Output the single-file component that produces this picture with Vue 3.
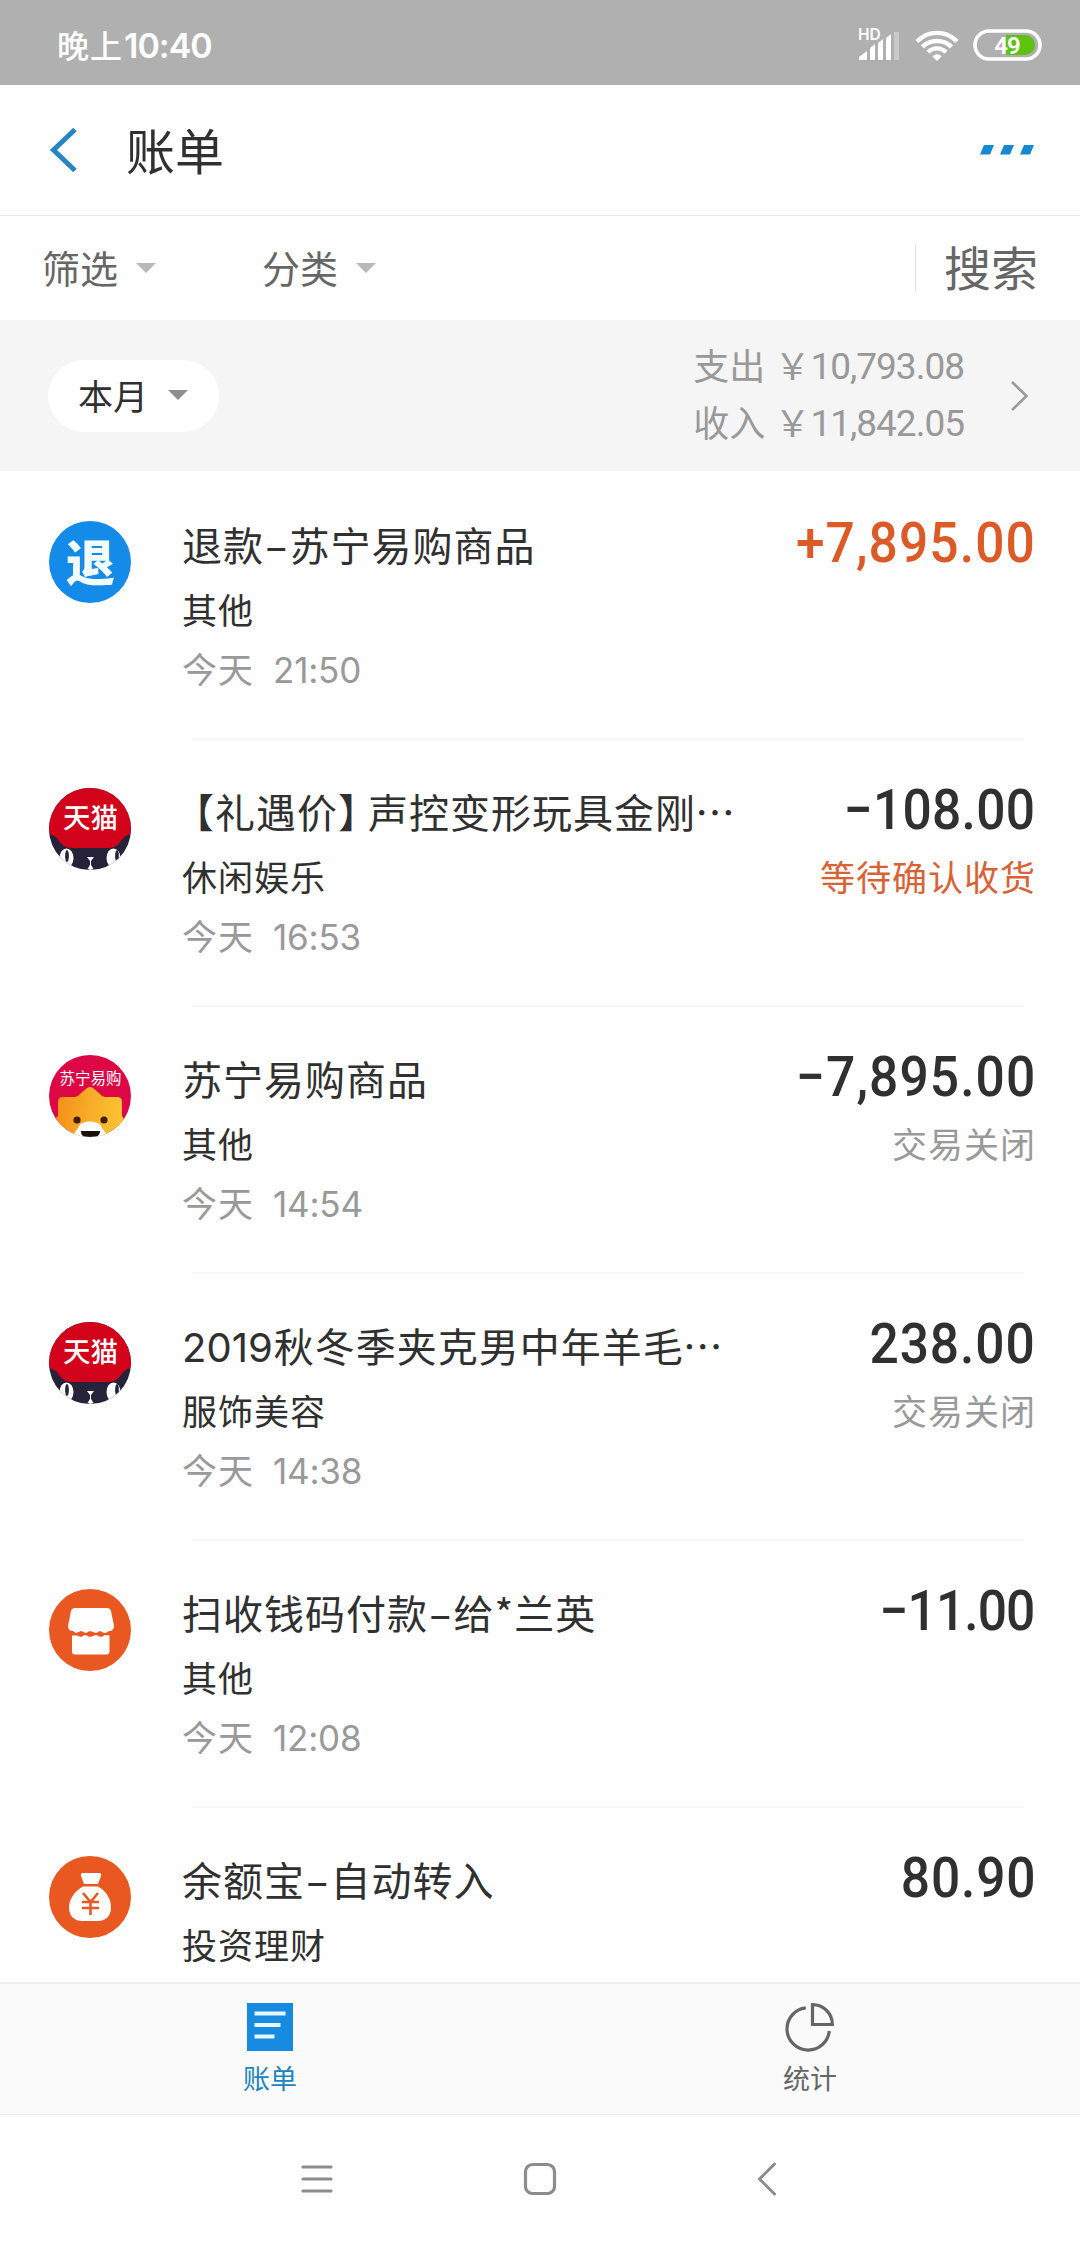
<script setup>
const bills = [
  { icon: 'refund', title: ['退款', '–', '苏宁易购商品'], type: '其他', time: '21:50', amount: '+7,895.00', income: true, spacing: 1.2 },
  { icon: 'tmall', title: ['【', '礼遇价', '】', '声控变形玩具金刚', '…'], type: '休闲娱乐', time: '16:53', amount: '−108.00', status: '等待确认收货', pending: true, spacing: 0.3 },
  { icon: 'suning', title: ['苏宁易购商品'], type: '其他', time: '14:54', amount: '−7,895.00', status: '交易关闭', spacing: 1.2 },
  { icon: 'tmall', title: ['2019', '秋冬季夹克男中年羊毛', '…'], type: '服饰美容', time: '14:38', amount: '238.00', status: '交易关闭', spacing: 1 },
  { icon: 'shop', title: ['扫收钱码付款', '–', '给*兰英'], type: '其他', time: '12:08', amount: '−11.00', spacing: -1 },
  { icon: 'bag', title: ['余额宝', '–', '自动转入'], type: '投资理财', amount: '80.90', spacing: 0.9 },
]

const totals = [
  { label: '支出', sum: '10,793.08' },
  { label: '收入', sum: '11,842.05' },
]

const pieceClass = { '–': 'dash', '【': 'open', '】': 'close', '2019': 'year', '…': 'dots' }
</script>

<template>
  <div class="screen">
    <header class="status">
      <div class="clock">晚上<span class="digits">10:40</span></div>
      <div class="indicators">
        <svg class="signal" width="44" height="36" viewBox="0 0 44 36">
          <text x="0" y="14" class="hd">HD</text>
          <path fill="#fff" d="M1 34v-3l8-6v9zM12 34V22l5-4v16zM20 34V17l5-4v21zM28 34V12l5-4v26z" />
          <path fill="#c9c9c9" d="M36 6h5v28h-5z" />
        </svg>
        <svg class="wifi" width="44" height="32" viewBox="0 0 44 32">
          <g fill="none" stroke="#fff" stroke-width="4.4">
            <path d="M2 11.5C13 0 31 0 42 11.5" />
            <path d="M7.500 17C15 9 29 9 36.500 17" />
            <path d="M13 22.300C18 17 26 17 31 22.300" />
          </g>
          <path fill="#fff" d="M17.500 26.500c2-3 7-3 9 0L22 31z" />
        </svg>
        <svg class="battery" width="69" height="32" viewBox="0 0 69 32">
          <path fill="#5cc312" d="M33 6h19a10 10 0 0 1 0 20H33z" />
          <rect x="2" y="2" width="65" height="28" rx="14" fill="none" stroke="#fff" stroke-width="3.600" />
          <text x="34" y="24.500" text-anchor="middle" class="level">49</text>
        </svg>
      </div>
    </header>

    <nav class="titlebar">
      <svg class="back" width="30" height="46" viewBox="0 0 30 46">
        <path d="M27 2.500 5.500 23 27 43.500" fill="none" stroke="#2586c2" stroke-width="5" />
      </svg>
      <h1>账单</h1>
      <svg class="more" width="54" height="10" viewBox="0 0 54 10" fill="#1688d0">
        <path d="M4 0h10l-4 9.500H0zM24 0h10l-4 9.500H20zM44 0h10l-4 9.500H40z" />
      </svg>
    </nav>

    <section class="filters">
      <div class="filter"><span>筛选</span><i class="caret"></i></div>
      <div class="filter"><span>分类</span><i class="caret"></i></div>
      <div class="search"><span>搜索</span></div>
    </section>

    <section class="summary">
      <button class="month">本月<i class="caret"></i></button>
      <div class="totals">
        <p v-for="t in totals" :key="t.label">{{ t.label }}<span class="yen">{{ '\uFFE5' }}</span><span class="sum">{{ t.sum }}</span></p>
      </div>
      <svg class="go" width="20" height="32" viewBox="0 0 20 32">
        <path d="M2 2l14.500 14L2 30" fill="none" stroke="#9a9a9a" stroke-width="2.600" />
      </svg>
    </section>

    <main class="list">
      <article v-for="(b, i) in bills" :key="i" class="bill">
        <svg class="avatar" width="82" height="82" viewBox="0 0 82 82">
          <defs>
            <clipPath :id="'round' + i"><circle cx="41" cy="41" r="41" /></clipPath>
            <linearGradient :id="'fur' + i" x1="0" y1="0.300" x2="1" y2="0.400">
              <stop offset="0" stop-color="#f38a16" />
              <stop offset="0.550" stop-color="#f8ae28" />
              <stop offset="1" stop-color="#fcc534" />
            </linearGradient>
          </defs>
          <g :clip-path="`url(#round${i})`">
            <template v-if="b.icon === 'refund'">
              <path fill="#148be8" d="M0 0h82v82H0z" />
              <text x="41.500" y="60" text-anchor="middle" class="refund-mark">退</text>
            </template>
            <template v-else-if="b.icon === 'tmall'">
              <path fill="#25223a" d="M0 0h82v82H0z" />
              <path fill="#d2021b" d="M0 0h82v46c-5 1-7 3-10 7-3 4-6 7-13 7H23c-7 0-10-3-13-7-3-4-5-6-10-7z" />
              <text x="41.500" y="39.500" text-anchor="middle" class="tmall-mark">天猫</text>
              <ellipse cx="17.500" cy="70" rx="7" ry="9.500" fill="#fff" />
              <ellipse cx="64.500" cy="70" rx="7" ry="9.500" fill="#fff" />
              <ellipse cx="18" cy="68" rx="1.900" ry="6" fill="#25223a" />
              <ellipse cx="68" cy="68" rx="1.900" ry="6" fill="#25223a" />
              <path fill="#fff" d="M38 69h7l-3 4h-1zM41.500 76l3 5-3 1-3-1z" />
              <path d="M41.500 73v4" fill="none" stroke="#fff" stroke-width="1" />
            </template>
            <template v-else-if="b.icon === 'suning'">
              <path fill="#de0746" d="M0 0h82v82H0z" />
              <text x="41.500" y="29" text-anchor="middle" class="suning-mark">苏宁易购</text>
              <path :fill="`url(#fur${i})`" d="M9 47q0-5 5-5h12q3 0 5-3l7-6q3-2 6 0l7 6q2 3 5 3h12q5 0 5 5v14l4 6v15H2V67l7-6z" />
              <path fill="#fff" d="M22 82c3-3 5-6 8-11 3-6 19-6 22 0 3 5 5 8 8 11z" />
              <circle cx="28" cy="65" r="3.600" fill="#421c10" />
              <circle cx="55" cy="65" r="3.600" fill="#421c10" />
              <path fill="#17100e" d="M32 76h19c0 4-3 6-6 6h-7c-4 0-6-2-6-6z" />
            </template>
            <template v-else-if="b.icon === 'shop'">
              <path fill="#e95820" d="M0 0h82v82H0z" />
              <path fill="#fff" d="M25 19h33q3 0 4 3l3 15q0 5-5 5-2 2-5 2l-4-2-4 2-6-2-4 2-5-2-5 2-3-2q-5 0-5-5l3-15q1-3 4-3z" />
              <path fill="#fff" d="M23 46.500l5 0 4 1.500 4-2 5 2 6-2 5 2 4-2 4.500 .500v16q0 3-3 3H26q-3 0-3-3z" />
            </template>
            <template v-else>
              <path fill="#e95820" d="M0 0h82v82H0z" />
              <path fill="#fff" d="M34 17h16q3 0 2 3l-3 8H35l-3-8q-1-3 2-3z" />
              <path fill="#fff" d="M34 30.500h15c9 5 13 13 13 21 0 9-6 13.500-13 13.500H33c-7 0-13-4.500-13-13.500 0-8 5-16 14-21z" />
              <path d="M34 37l7.500 9L49 37M33 46h17M33 52h17M41.500 45v14" fill="none" stroke="#e95820" stroke-width="2.600" />
            </template>
          </g>
        </svg>
        <div class="detail">
          <h2><span v-for="(piece, n) in b.title" :key="n" :class="pieceClass[piece]">{{ piece }}</span></h2>
          <p class="type">{{ b.type }}</p>
          <p v-if="b.time" class="time">今天<span>{{ b.time }}</span></p>
        </div>
        <div class="side">
          <strong class="amount" :class="{ income: b.income }" :style="{ letterSpacing: b.spacing + 'px', marginRight: -b.spacing - 1 + 'px' }">{{ b.amount }}</strong>
          <p v-if="b.status" class="state" :class="{ pending: b.pending }">{{ b.status }}</p>
        </div>
      </article>
    </main>

    <footer class="tabs">
      <div class="tab active">
        <svg width="50" height="50" viewBox="0 0 50 50">
          <path fill="#168be0" d="M2 1h46v48H2z" />
          <path d="M9.500 11.500h31M9.500 23h26M9.500 34.500h20" stroke="#e4f8ff" stroke-width="4.200" />
        </svg>
        <span>账单</span>
      </div>
      <div class="tab">
        <svg width="50" height="50" viewBox="0 0 50 50">
          <g fill="none" stroke="#666" stroke-width="3.200">
            <path d="M20.800 5.800A21.200 21.200 0 1 0 44.300 29" />
            <path d="M27.500 2.600V22.500H47.400A20 20 0 0 0 27.500 2.600z" />
          </g>
        </svg>
        <span>统计</span>
      </div>
    </footer>

    <div class="system">
      <svg width="32" height="34" viewBox="0 0 32 34">
        <path d="M2 5h28M2 17h28M2 29h28" stroke="#8c8c8c" stroke-width="3.200" stroke-linecap="round" />
      </svg>
      <svg class="home" width="34" height="34" viewBox="0 0 34 34">
        <rect x="2.500" y="2.500" width="29" height="29" rx="7" fill="none" stroke="#8c8c8c" stroke-width="3.200" />
      </svg>
      <svg class="return" width="20" height="34" viewBox="0 0 20 34">
        <path d="M17.500 2 2.500 17l15 15" fill="none" stroke="#8c8c8c" stroke-width="3" stroke-linecap="round" />
      </svg>
    </div>
  </div>
</template>

<style>
body {
  margin: 0;
  background: #fff;
}
</style>

<style scoped>
.screen {
  width: 1080px;
  height: 2244px;
  display: flex;
  flex-direction: column;
  overflow: hidden;
  background: #fefefe;
  color: #303030;
  font-family: "Noto Sans CJK SC", sans-serif;
}
h1, h2, p { margin: 0; font-weight: 400; }
svg { display: block; flex: none; }

.status {
  height: 85px;
  flex: none;
  display: flex;
  justify-content: space-between;
  box-sizing: border-box;
  padding: 0 38px 0 57px;
  background: #b0b0b0;
  color: #fff;
}
.clock { font-size: 32px; font-weight: 500; line-height: 88px; letter-spacing: 1px; white-space: nowrap; }
.digits { font-family: Inter, sans-serif; font-size: 34px; font-weight: 600; letter-spacing: -1px; margin-left: 1px; }
.indicators { display: flex; align-items: flex-start; }
.signal { margin-top: 26px; }
.wifi { margin: 30px 14px 0 13px; }
.battery { margin-top: 29px; }
.hd { font: 600 15.500px Inter, sans-serif; fill: #fff; }
.level { font: 600 24px Roboto, sans-serif; fill: #fff; letter-spacing: -1px; }

.titlebar {
  height: 131px;
  flex: none;
  display: flex;
  align-items: center;
  border-bottom: 1px solid #e9e9e9;
  box-sizing: border-box;
  padding: 0 46px 0 48px;
}
h1 { flex: 1; margin: -3px 0 0 48px; font-size: 49px; line-height: 60px; }

.filters {
  height: 104px;
  flex: none;
  display: flex;
  align-items: center;
  padding: 0 42px;
  color: #666;
}
.filter { width: 220px; display: flex; align-items: center; font-size: 38px; line-height: 50px; }
.filter span { padding-bottom: 3px; }
.caret {
  margin-left: 18px;
  border: 10px solid transparent;
  border-top-color: #b8b8b8;
  border-bottom: 0;
}
.search {
  margin-left: auto;
  height: 48px;
  padding-left: 28px;
  border-left: 1px solid #e0e0e0;
  font-size: 47px;
  line-height: 43px;
}

.summary {
  height: 151px;
  flex: none;
  display: flex;
  align-items: center;
  box-sizing: border-box;
  padding: 0 50px 0 48px;
  background: #f5f5f5;
}
.month {
  width: 171px;
  height: 72px;
  display: flex;
  align-items: center;
  padding: 0 0 2px 30px;
  border: 0;
  border-radius: 36px;
  background: #fff;
  color: #303030;
  font: 35px/50px "Noto Sans CJK SC", sans-serif;
}
.month .caret { margin-left: 20px; border-top-color: #8e8e8e; }
.totals { margin: -5px 0 0 auto; color: #999; font-size: 36px; line-height: 57px; }
.totals p { display: flex; justify-content: flex-end; height: 57px; }
.yen { margin: 0 0 0 9px; }
.sum { font: 37px/62px Roboto, sans-serif; letter-spacing: -1px; margin-right: -1px; }
.go { margin-left: 47px; }

.list { flex: 1; min-height: 0; overflow: hidden; }
.bill {
  position: relative;
  height: 267px;
  display: flex;
  box-sizing: border-box;
  padding: 50px 46px 0 49px;
}
.bill::after {
  content: "";
  position: absolute;
  left: 192px;
  right: 56px;
  bottom: -2px;
  height: 2px;
  background: #f7f7f7;
}
.detail { margin: -9px 0 0 51px; flex: 1; min-width: 0; white-space: nowrap; }
h2 { height: 64px; font-size: 40px; line-height: 64px; letter-spacing: 1px; }
.dash { margin: 0 1.500px; font-weight: 500; }
.open { margin-left: 12px; font-feature-settings: "halt"; }
.close { margin-right: 9px; font-feature-settings: "halt"; }
.year { font-family: Inter, sans-serif; letter-spacing: 0; margin-right: 1px; }
.dots { margin-left: -1px; }
.type { height: 64px; font-size: 35px; line-height: 65px; letter-spacing: 1px; }
.time { height: 56px; color: #999; font-size: 35px; line-height: 56px; letter-spacing: 1px; }
.time span { margin-left: 19px; font-family: Inter, sans-serif; letter-spacing: -0.200px; }
.side { flex: none; display: flex; flex-direction: column; align-items: flex-end; margin-top: -9px; white-space: nowrap; }
.amount {
  height: 64px;
  font: 500 56px/63px Roboto, sans-serif;
  transform: scaleX(0.92);
  transform-origin: right center;
}
.income { color: #dc5a26; }
.state { font-size: 35px; line-height: 65px; color: #999; letter-spacing: 1px; margin-right: -2px; }
.pending { color: #d96234; }
.refund-mark { font: 900 49px "Noto Sans CJK SC", sans-serif; fill: #f2fcff; }
.tmall-mark { font: 500 27.500px "Noto Sans CJK SC", sans-serif; fill: #fff; }
.suning-mark { font: 400 15.500px "Noto Sans CJK SC", sans-serif; fill: #fff; }

.tabs {
  height: 133px;
  flex: none;
  display: flex;
  box-sizing: border-box;
  border-top: 2px solid #f0f0f0;
  border-bottom: 1px solid #e8e8e8;
  background: #fafafa;
}
.tab {
  flex: 1;
  display: flex;
  flex-direction: column;
  align-items: center;
  padding-top: 18px;
  color: #666;
  font-size: 27px;
  line-height: 51px;
}
.active { color: #1c84c0; }

.system {
  height: 129px;
  flex: none;
  display: flex;
  align-items: flex-start;
  box-sizing: border-box;
  padding: 47px 0 0 301px;
}
.home { margin-left: 190px; }
.return { margin-left: 200px; }
</style>
